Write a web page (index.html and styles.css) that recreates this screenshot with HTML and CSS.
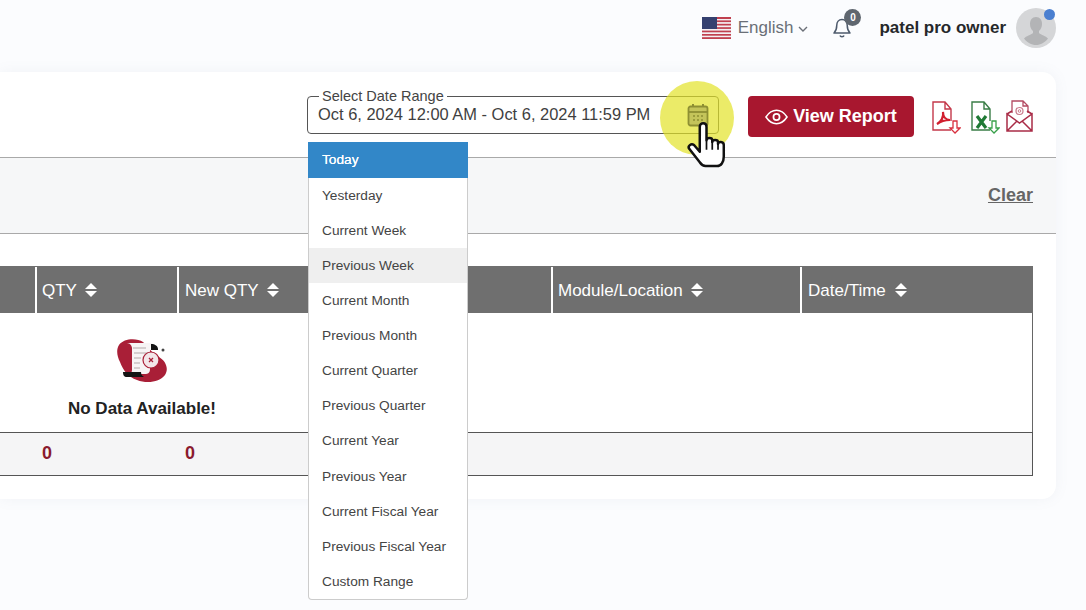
FILE: index.html
```html
<!DOCTYPE html>
<html lang="en">
<head>
<meta charset="utf-8">
<title>Report</title>
<link rel="stylesheet" href="styles.css">
</head>
<body>
<div class="page">
  <header class="topbar">
    <div class="lang">
      <svg class="flag" viewBox="0 0 29 22" width="29" height="22">
        <rect width="29" height="22" fill="#f4f0f2"/>
        <g fill="#c0404f"><rect width="29" height="2"/><rect y="3.4" width="29" height="1.7"/><rect y="6.8" width="29" height="1.7"/><rect y="10.2" width="29" height="1.7"/><rect y="13.6" width="29" height="1.7"/><rect y="17" width="29" height="1.7"/><rect y="20.2" width="29" height="1.8"/></g>
        <rect width="15" height="12" fill="#34406f"/>
      </svg>
      <span class="lang-name">English</span>
      <svg class="chev" viewBox="0 0 10 6" width="10" height="6"><path d="M1 1l4 4 4-4" fill="none" stroke="#6a6f77" stroke-width="1.4"/></svg>
    </div>
    <div class="bell">
      <svg viewBox="0 0 20 22" width="20" height="22"><path d="M10 2.5c-3.4 0-5.2 2.6-5.2 5.6 0 4.400-1 6.200-2.800 8h16c-1.800-1.800-2.800-3.600-2.800-8 0-3-1.800-5.600-5.200-5.600zM8 18.500c.4 1.500 3.600 1.500 4 0" fill="none" stroke="#4d5a6c" stroke-width="1.500" stroke-linejoin="round"/></svg>
      <span class="badge">0</span>
    </div>
    <span class="user-name">patel pro owner</span>
    <div class="avatar">
      <svg viewBox="0 0 40 40" width="40" height="40"><circle cx="20" cy="20" r="20" fill="#d5d6d8"/><path d="M20 9c-4 0-6 3-6 7 0 3 1.200 5.500 3 7v2c-2 2-7 3-9 5.500 3 4 7.500 6.500 12 6.500s9-2.500 12-6.500c-2-2.500-7-3.500-9-5.500v-2c1.800-1.500 3-4 3-7 0-4-2-7-6-7z" fill="#b3b4b6"/></svg>
      <span class="dot"></span>
    </div>
  </header>

  <main class="card">
    <section class="toolbar">
      <fieldset class="range">
        <legend>Select Date Range</legend>
        <span class="range-value">Oct 6, 2024 12:00 AM - Oct 6, 2024 11:59 PM</span>
      </fieldset>
      <button class="view-btn" type="button">
        <svg viewBox="0 0 24 16" width="23" height="16"><path d="M1 8c3-4.500 6.500-7 11-7s8 2.500 11 7c-3 4.500-6.500 7-11 7S4 12.500 1 8z" fill="none" stroke="#fff" stroke-width="1.600"/><circle cx="12" cy="8" r="3.200" fill="none" stroke="#fff" stroke-width="1.800"/></svg>
        View Report
      </button>
      <div class="exports">
        <svg class="pdf" viewBox="0 0 30 35" width="30" height="35"><path d="M20 30H2V2h12l6 7v12M14 2v7h6" fill="none" stroke="#c4384a" stroke-width="1.400"/><path d="M6 24c4-2 7-7 6-12 0 5 3 8 7 8-4 0-9 1-13 4z" fill="none" stroke="#d11f2f" stroke-width="2.200"/><path d="M22 21v7h-3l5 5 5-5h-3v-7z" fill="#fff" stroke="#d8303f" stroke-width="1.300"/></svg>
        <svg class="xls" viewBox="0 0 30 35" width="30" height="35"><path d="M20 30H2V2h12l6 7v12M14 2v7h6" fill="none" stroke="#3a7d47" stroke-width="1.400"/><path d="M7 16l9 12M16 16L7 28" stroke="#1f7a35" stroke-width="3.200" fill="none"/><path d="M22 21v7h-3l5 5 5-5h-3v-7z" fill="#fff" stroke="#38a04a" stroke-width="1.300"/></svg>
        <svg class="mail" viewBox="0 0 27 33" width="27" height="33"><path d="M6 13V1h11l5 5v7M17 1v5h5" fill="none" stroke="#b34a62" stroke-width="1.300"/><path d="M1 14l5-3M26 14l-5-3M1 14v17h25V14L13.500 23zM1 31l10-10M26 31L16 21" fill="none" stroke="#a92c47" stroke-width="1.500"/><circle cx="13.500" cy="11" r="3.500" fill="none" stroke="#c9788a" stroke-width="1.200"/><circle cx="13.500" cy="11" r="1.300" fill="none" stroke="#c9788a"/></svg>
      </div>
    </section>

    <section class="filters"><a class="clear" href="#">Clear</a></section>

    <section class="report">
      <div class="thead">
        <div class="th"></div>
        <div class="th">QTY <i class="sort"></i></div>
        <div class="th new">New QTY <i class="sort"></i></div>
        <div class="th"></div>
        <div class="th">Module/Location <i class="sort"></i></div>
        <div class="th date">Date/Time <i class="sort"></i></div>
      </div>
      <div class="tbody">
        <div class="empty">
          <svg viewBox="0 0 50 45" width="50" height="45">
            <path d="M2 7C7 0 20 0 26 4 31 8 34 15 42 19c7 4 10 12 6 18-5 7-18 9-28 5C11 39 6 32 3 24 0 18-1 12 2 7z" fill="#a91f37"/>
            <path d="M10 5h26c-2 1-3 3-3 5v21c0 4-2 5-5 5H13c1-1 2-2 2-4V10c0-2-2-5-5-5z" fill="#f7f4f5"/>
            <path d="M34 6c4 0 7 2 7 5v1h-7zM6 34h18c0 2 1 4 3 5H10c-3 0-4-2-4-5z" fill="#141414"/>
            <g stroke="#b4a7aa" stroke-width="1.200"><path d="M16 10h13M17 15h14M17 20h7M17 25h6M17 30h6"/></g>
            <circle cx="34" cy="22" r="8" fill="#f3e6e9" stroke="#a91f37" stroke-width="1.200"/>
            <path d="M32 20l4 4M36 20l-4 4" stroke="#a91f37" stroke-width="1.300"/>
            <circle cx="46" cy="12" r="1.500" fill="#444"/>
          </svg>
          <p class="empty-text">No Data Available!</p>
        </div>
      </div>
      <div class="tfoot">
        <div class="td"></div>
        <div class="td">0</div>
        <div class="td new">0</div>
      </div>
    </section>
  </main>

  <div class="highlight"></div>
  <svg class="cal" viewBox="0 0 22 24" width="22" height="24"><path d="M6 1v5M16 1v5" stroke="#8e8f33" stroke-width="2"/><rect x="1.500" y="3.500" width="19" height="19" rx="2" fill="#c4c45a" stroke="#8e8f33" stroke-width="1.800"/><path d="M1.500 9h19" stroke="#8e8f33" stroke-width="1.800"/><g fill="#8e8f33"><circle cx="7" cy="13" r="1"/><circle cx="11" cy="13" r="1"/><circle cx="15" cy="13" r="1"/><circle cx="7" cy="17" r="1"/><circle cx="11" cy="17" r="1"/><circle cx="15" cy="17" r="1"/></g></svg>
  <svg class="hand" viewBox="0 0 42 50" width="41" height="48"><path d="M14 32V6c0-5 7-5 7 0v14c0-3 6-3 6 0v2c0-3 6-3 6 0v2c0-3 6-3 6 1v12c0 6-3 10-7 10H20c-3 0-4-1-6-4L3 29c-2-3 2-6 5-4z" fill="#fff" stroke="#111" stroke-width="2.600" stroke-linejoin="round"/><path d="M21 20v10M27 22v8M33 24v6" stroke="#111" stroke-width="1.800"/></svg>

  <ul class="menu">
    <li class="item active">Today</li>
    <li class="item">Yesterday</li>
    <li class="item">Current Week</li>
    <li class="item hover">Previous Week</li>
    <li class="item">Current Month</li>
    <li class="item">Previous Month</li>
    <li class="item">Current Quarter</li>
    <li class="item">Previous Quarter</li>
    <li class="item">Current Year</li>
    <li class="item">Previous Year</li>
    <li class="item">Current Fiscal Year</li>
    <li class="item">Previous Fiscal Year</li>
    <li class="item">Custom Range</li>
  </ul>
</div>
</body>
</html>
```

FILE: styles.css
```css
* { box-sizing: border-box; }
html, body { margin: 0; padding: 0; }
body { font-family: "Liberation Sans", Arial, sans-serif; background: #fbfcfe; color: #333; }
.page { position: relative; width: 1086px; height: 610px; overflow: hidden; }

.topbar { height: 72px; display: flex; align-items: center; justify-content: flex-end; padding: 0 30px 16px 0; }
.lang { display: flex; align-items: center; }
.flag { margin-right: 7px; }
.lang-name { font-size: 17px; color: #6a6f77; }
.chev { margin-left: 5px; margin-top: 2px; }
.bell { position: relative; width: 20px; height: 22px; margin-left: 24px; }
.badge { position: absolute; left: 12px; top: -8px; width: 17px; height: 17px; border-radius: 50%; background: #5f666f; color: #fff; font-size: 10px; font-weight: 700; text-align: center; line-height: 17px; }
.user-name { margin-left: 27px; font-size: 17px; font-weight: 700; color: #26282b; }
.avatar { position: relative; width: 40px; height: 40px; margin-left: 10px; }
.avatar svg { display: block; }
.dot { position: absolute; right: 1px; top: 1px; width: 11px; height: 11px; border-radius: 50%; background: #4a7fd0; }

.card { width: 1056px; height: 427px; background: #fff; border-radius: 0 14px 14px 0; box-shadow: 0 0 14px rgba(120, 130, 150, .08); }
.toolbar { height: 86px; border-bottom: 1px solid #a9a9a9; display: flex; align-items: flex-start; justify-content: flex-end; padding: 17px 23px 0 0; }
.range { width: 412px; height: 45px; margin: 0 29px 0 0; padding: 0 10px; border: 1px solid #555; border-radius: 4px; }
.range legend { font-size: 14.500px; line-height: 15px; padding: 0 3px; margin-left: 1px; color: #444; }
.range-value { display: block; font-size: 16.450px; line-height: 20px; color: #3f3f3f; white-space: nowrap; }
.view-btn { width: 166px; height: 41px; margin-top: 7px; border: 0; border-radius: 4px; background: #a8172f; color: #fff; font: 700 18px "Liberation Sans", Arial, sans-serif; display: flex; align-items: center; justify-content: center; gap: 5px; padding: 0; }
.exports { display: flex; align-items: flex-start; margin-left: 17px; margin-top: 11px; }
.xls { margin-left: 9px; }
.mail { margin-left: 6px; }

.filters { height: 76px; background: #f6f7f8; border-bottom: 1px solid #a9a9a9; display: flex; justify-content: flex-end; align-items: center; padding: 0 23px 0 0; }
.clear { font-size: 18px; font-weight: 700; color: #666; text-decoration: underline; }

.report { width: 1033px; padding-top: 32px; }
.thead, .tfoot { display: grid; grid-template-columns: 37px 142px 130px 244px 249px 231px; }
.thead { height: 47px; background: #6f6f6f; }
.th { padding: 0 0 0 5px; margin-top: 1px; border-right: 2px solid #fff; color: #fff; font-size: 17px; line-height: 48px; white-space: nowrap; }
.th.new { padding-left: 6px; border-right: 0; }
.th.date { padding-left: 6px; border-right: 0; }
.sort { display: inline-block; position: relative; width: 12px; height: 14px; margin-left: 4px; vertical-align: -1px; }
.sort::before, .sort::after { content: ""; position: absolute; left: 0; border-left: 6px solid transparent; border-right: 6px solid transparent; }
.sort::before { top: 0; border-bottom: 6px solid #fff; }
.sort::after { bottom: 0; border-top: 6px solid #fff; }

.tbody { height: 119px; border-right: 1px solid #666; }
.empty { width: 284px; padding-top: 25px; display: flex; flex-direction: column; align-items: center; }
.empty svg { display: block; }
.empty-text { margin: 16px 0 0; font-size: 17px; font-weight: 700; color: #222; }

.tfoot { height: 44px; background: #f5f5f6; border-top: 1px solid #555; border-bottom: 1px solid #555; border-right: 1px solid #555; }
.td { padding-left: 5px; font-size: 18px; font-weight: 700; line-height: 41px; color: #8a1a2e; }
.td.new { padding-left: 6px; }

.highlight { position: absolute; left: 660px; top: 81px; width: 74px; height: 74px; border-radius: 50%; background: rgba(226, 226, 40, .7); }
.cal { position: absolute; left: 687px; top: 103px; }
.hand { position: absolute; left: 686px; top: 121px; }

.menu { position: absolute; left: 308px; top: 142px; width: 160px; height: 458px; margin: 0; padding: 0; list-style: none; background: #fff; border: 1px solid #ccc; border-top: 0; border-radius: 0 0 4px 4px; }
.menu::before { content: ""; position: absolute; left: 14px; top: -7px; border-left: 7px solid transparent; border-right: 7px solid transparent; border-bottom: 7px solid #fff; }
.item { height: 35.150px; padding-left: 13px; font-size: 13.700px; line-height: 35px; color: #444; white-space: nowrap; }
.item.active { height: 36px; margin: 0 -1px -.5px; padding-left: 14px; line-height: 35px; background: #3287c8; color: #fff; text-shadow: 0 0 .6px #fff; }
.item.hover { background: #efefef; }
```
